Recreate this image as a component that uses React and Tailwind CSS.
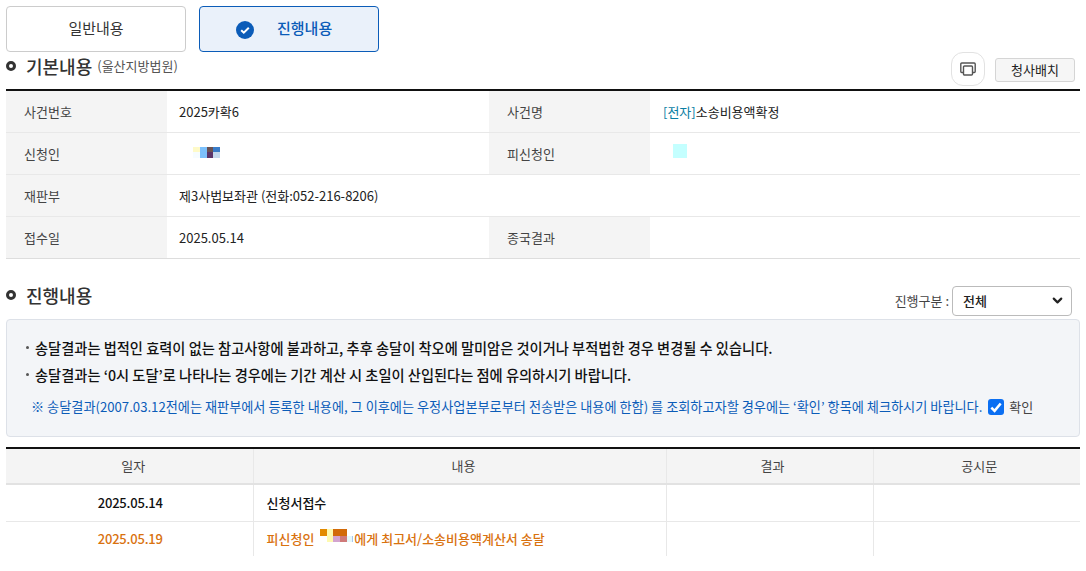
import React from 'react';
import { ChevronDown } from 'lucide-react';

// 가려진 이름 자리의 모자이크
const Mosaic = ({ width, height, cells, className = '' }) => (
  <svg width={width} height={height} viewBox={`0 0 ${width} ${height}`} shapeRendering="crispEdges" className={`block ${className}`}>
    {cells.map(([x, y, w, h, fill], i) => (
      <rect key={i} x={x} y={y} width={w} height={h} fill={fill} />
    ))}
  </svg>
);

const SectionTitle = ({ title, sub }) => (
  <div className="flex items-center">
    <span className="w-[10px] h-[10px] rounded-full border-[3px] border-[#333]" />
    <h2 className="ml-[10px] text-[18px] leading-[26px] font-medium text-[#333]">{title}</h2>
    {sub && <span className="ml-[5px] text-[13px] leading-[26px] text-[#555]">{sub}</span>}
  </div>
);

const Label = ({ children }) => (
  <div className="w-[161px] shrink-0 bg-[#f4f4f4] pl-[18px] flex items-center text-[#444]">{children}</div>
);

const InfoRow = ({ children, last }) => (
  <div className={`flex h-[42px] border-b ${last ? 'border-[#ddd]' : 'border-[#e8e8e8]'}`}>{children}</div>
);

const Notice = ({ children }) => (
  <li className="flex items-center h-[27px] text-[14.24px] font-medium text-[#111]">
    <span className="w-[3px] h-[3px] rounded-full bg-[#555] ml-[19px] mr-[6px]" />
    {children}
  </li>
);

export default function App() {
  return (
    <div className="w-[1086px] h-[571px] overflow-hidden bg-white px-[6px] pt-[6px] text-[13px] text-[#222] font-['Noto_Sans_CJK_KR','Noto_Sans',sans-serif]">
      <div className="flex gap-[13px]">
        <button className="w-[180px] h-[46px] pb-[2px] rounded-[4px] border border-[#ccc] bg-white text-[15px] text-[#333]">일반내용</button>
        <button className="relative w-[180px] h-[46px] pb-[2px] pl-[77px] text-left rounded-[4px] border border-[#0b5cb8] bg-[#eaf1fa] text-[15px] font-medium text-[#0b5cb8]">
          <svg className="absolute left-[36px] top-[14px]" width="18" height="18" viewBox="0 0 18 18">
            <circle cx="9" cy="9" r="9" fill="#0b5cb8" />
            <path d="M5.2 9.2l2.6 2.5 5-5" fill="none" stroke="#fff" strokeWidth="2" />
          </svg>
          진행내용
        </button>
      </div>

      <div className="flex items-start justify-between h-[37px]">
        <div className="-mt-[1px] pt-[2px]">
          <SectionTitle title="기본내용" sub="(울산지방법원)" />
        </div>
        <div className="flex items-center gap-[10px] pr-[5px]">
          <button className="w-[34px] h-[34px] rounded-[12px] border border-[#e2e2e2] bg-white flex items-center justify-center">
            <svg width="16" height="14" viewBox="0 0 16 14" fill="none" stroke="#555" strokeWidth="1.4">
              <path d="M3 10.5H1.7A1 1 0 0 1 .8 9.5V2a1 1 0 0 1 1-1h12.4a1 1 0 0 1 1 1v7.500a1 1 0 0 1-1 1H13" />
              <rect x="3.500" y="4" width="9" height="9" rx="1" />
            </svg>
          </button>
          <button className="w-[80px] h-[24px] mt-[1px] rounded-[3px] border border-[#d5d5d5] bg-[#f6f6f6] text-[13px] text-[#222]">청사배치</button>
        </div>
      </div>

      <div className="w-[1074px] border-t-2 border-[#111]">
        <InfoRow>
          <Label>사건번호</Label>
          <div className="w-[322px] pl-[12px] flex items-center text-[#222]">2025카확6</div>
          <Label>사건명</Label>
          <div className="flex-1 pl-[13px] flex items-center"><span className="text-[#0a7ea4]">[전자]</span>소송비용액확정</div>
        </InfoRow>
        <InfoRow>
          <Label>신청인</Label>
          <div className="w-[322px] pl-[26px] pb-[2px] flex items-center">
            <Mosaic width={27} height={11} cells={[
              [0, 0, 7, 5, '#fefac8'], [0, 5, 7, 6, '#f6fcff'], [7, 0, 7, 11, '#7cc0fb'],
              [14, 0, 6, 5, '#6b5252'], [14, 5, 6, 6, '#5b3468'],
              [20, 0, 7, 5, '#3a7cc8'], [20, 5, 7, 6, '#c4d8ec'],
            ]} />
          </div>
          <Label>피신청인</Label>
          <div className="flex-1 pl-[23px] pb-[6px] flex items-center">
            <div className="w-[14px] h-[14px] bg-[#c4ffff]" />
          </div>
        </InfoRow>
        <InfoRow>
          <Label>재판부</Label>
          <div className="flex-1 pl-[12px] flex items-center">제3사법보좌관 (전화:052-216-8206)</div>
        </InfoRow>
        <InfoRow last>
          <Label>접수일</Label>
          <div className="w-[322px] pl-[12px] flex items-center">2025.05.14</div>
          <Label>종국결과</Label>
          <div className="flex-1" />
        </InfoRow>
      </div>

      <div className="flex items-center justify-between w-[1074px] mt-[17px] h-[37px]">
        <SectionTitle title="진행내용" />
        <div className="flex items-center mt-[12px] mr-[8px] text-[#444]">
          <span className="mr-[3px]">진행구분 :</span>
          <div className="w-[120px] h-[30px] rounded-[4px] border border-[#bbb] bg-white pl-[10px] pr-[6px] flex items-center justify-between font-medium text-[#222]">
            전체
            <ChevronDown size={15} strokeWidth={3.500} className="text-[#222]" />
          </div>
        </div>
      </div>

      <div className="w-[1074px] h-[118px] mt-[6px] rounded-[4px] border border-[#dde1e8] bg-[#f3f5f8] pt-[14px]">
        <ul>
          <Notice>송달결과는 법적인 효력이 없는 참고사항에 불과하고, 추후 송달이 착오에 말미암은 것이거나 부적법한 경우 변경될 수 있습니다.</Notice>
          <Notice>송달결과는 ‘0시 도달’로 나타나는 경우에는 기간 계산 시 초일이 산입된다는 점에 유의하시기 바랍니다.</Notice>
        </ul>
        <p className="flex items-center mt-[9px] pl-[24px] text-[13.16px] text-[#0b5cb8]">
          ※ 송달결과(2007.03.12전에는 재판부에서 등록한 내용에, 그 이후에는 우정사업본부로부터 전송받은 내용에 한함) 를 조회하고자할 경우에는 ‘확인’ 항목에 체크하시기 바랍니다.
          <span className="ml-[6px] w-[16px] h-[16px] rounded-[3px] bg-[#0b6ff2] flex items-center justify-center">
            <svg width="14" height="14" viewBox="0 0 12 12"><path d="M2 6.500l2.800 2.800L10 3" fill="none" stroke="#fff" strokeWidth="2.200" /></svg>
          </span>
          <span className="ml-[5px] text-[13px] text-[#444]">확인</span>
        </p>
      </div>

      <table className="mt-[10px] w-[1074px] table-fixed border-collapse border-t-2 border-[#111]">
        <colgroup>
          <col className="w-[247px]" />
          <col className="w-[413px]" />
          <col className="w-[207px]" />
          <col className="w-[207px]" />
        </colgroup>
        <thead>
          <tr className="h-[36px] bg-[#f4f4f4] border-b-2 border-[#e2e2e2] text-[#444]">
            <th className="pl-[8px] font-normal border-r border-[#e8e8e8]">일자</th>
            <th className="pl-[8px] font-normal border-r border-[#e8e8e8]">내용</th>
            <th className="pl-[6px] font-normal border-r border-[#e8e8e8]">결과</th>
            <th className="pl-[5px] font-normal">공시문</th>
          </tr>
        </thead>
        <tbody>
          <tr className="h-[37px] border-b border-[#e8e8e8] font-medium text-[#111]">
            <td className="pl-[2px] text-center tracking-[-0.2px] border-r border-[#e8e8e8]">2025.05.14</td>
            <td className="pl-[13px] border-r border-[#e8e8e8]">신청서접수</td>
            <td className="border-r border-[#e8e8e8]" />
            <td />
          </tr>
          <tr className="h-[35px] font-medium text-[#d9720f]">
            <td className="pl-[2px] text-center tracking-[-0.2px] border-r border-[#e8e8e8]">2025.05.19</td>
            <td className="pl-[13px] border-r border-[#e8e8e8]">
              <span className="flex items-center">
                피신청인
                <Mosaic className="ml-[6px] -mt-[6px]" width={34} height={13} cells={[
                  [0, 0, 7, 7, '#e38a00'], [7, 0, 6, 13, '#fefab0'], [13, 0, 14, 7, '#d26a08'],
                  [13, 7, 7, 6, '#d3a4cf'], [20, 7, 7, 6, '#cf7a7a'], [27, 7, 5, 6, '#e4f8fb'],
                  [32, 7, 1, 6, '#a9c6ef'],
                ]} />
                에게 최고서/소송비용액계산서 송달
              </span>
            </td>
            <td className="border-r border-[#e8e8e8]" />
            <td />
          </tr>
        </tbody>
      </table>
    </div>
  );
}
